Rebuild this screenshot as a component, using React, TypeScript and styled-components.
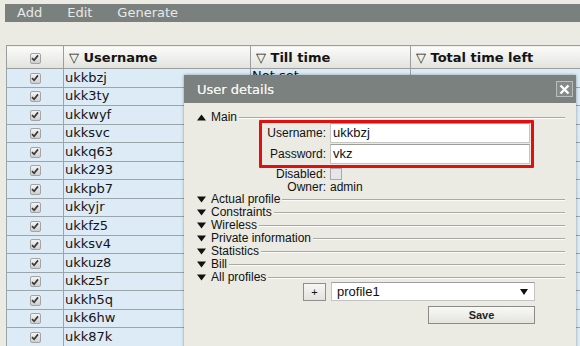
import React from "react";
import styled, { createGlobalStyle } from "styled-components";

const GlobalStyle = createGlobalStyle`
  html, body { margin: 0; padding: 0; background: #ebeae3; overflow: hidden; }
  body { width: 580px; height: 346px; font-family: "DejaVu Sans", sans-serif; }
`;

const Page = styled.div`
  position: relative;
  width: 580px;
  height: 346px;
  overflow: hidden;
  padding: 4px 0 0 5px;
  box-sizing: border-box;
`;

const MenuBar = styled.div`
  height: 18px;
  background: #7a807d;
  display: flex;
  align-items: center;
  gap: 25px;
  padding-left: 12px;
  color: #e6e9e6;
  font-size: 13px;
`;

const MenuItem = styled.span`
  line-height: 18px;
`;

const Table = styled.table`
  margin: 23px 0 0 1px;
  border-collapse: collapse;
  table-layout: fixed;
  width: 620px;
  font-size: 13px;
  color: #141414;
`;

const HeadCell = styled.th`
  height: 22px;
  padding: 0 0 0 5px;
  text-align: left;
  font-weight: bold;
  border: 1px solid #9a9e9e;
  background: linear-gradient(#fbfbfa, #e2e2dd);
  white-space: nowrap;
  overflow: hidden;
`;

const CheckHead = styled(HeadCell)`
  padding: 0;
  text-align: center;
`;

const Row = styled.tr`
  height: 18.5px;
  background: #dcebf5;
`;

const Cell = styled.td`
  padding: 0 0 0 1px;
  border: 1px solid #9aa5aa;
  white-space: nowrap;
  overflow: hidden;
  line-height: 16px;
`;

const TopCell = styled(Cell)`
  vertical-align: top;
  line-height: 14px;
`;

const CheckCell = styled(Cell)`
  padding: 0;
  text-align: center;
`;

const CheckBox = styled.span`
  display: inline-flex;
  align-items: center;
  justify-content: center;
  width: 11px;
  height: 11px;
  box-sizing: border-box;
  border: 1px solid #a4a4a4;
  border-radius: 2px;
  background: linear-gradient(#f4f4f4, #cfcfcf);
  vertical-align: middle;
`;

const Tick = () => (
  <CheckBox>
    <svg width="8" height="8" viewBox="0 0 8 8">
      <path d="M1 4.2 L3.1 6.3 L7 1.4" fill="none" stroke="#3a3a3a" strokeWidth="1.7" />
    </svg>
  </CheckBox>
);

const Dialog = styled.div`
  position: absolute;
  left: 184px;
  top: 75px;
  width: 392px;
  height: 290px;
  background: #ebebe4;
  box-shadow: 0 0 3px rgba(0, 0, 0, 0.35);
  font-family: "Liberation Sans", Arial, sans-serif;
  font-size: 12px;
  color: #111;
`;

const TitleBar = styled.div`
  height: 28px;
  background: #7b817e;
  display: flex;
  align-items: center;
  justify-content: space-between;
  padding: 0 3px 0 13px;
  color: #f1f3f1;
  font-family: "DejaVu Sans", sans-serif;
  font-size: 13px;
  text-shadow: 0 0 0.4px #f1f3f1;
`;

const CloseButton = styled.span`
  width: 17px;
  height: 16px;
  box-sizing: border-box;
  border: 1px solid #b9bdbb;
  display: flex;
  align-items: center;
  justify-content: center;
  background: #858b88;
`;

const Body = styled.div`
  padding: 8px 11px 0 13px;
`;

const SectionHead = styled.div`
  display: flex;
  align-items: center;
  height: 13px;
  line-height: 13px;
`;

const Arrow = styled.svg`
  width: 9px;
  height: 7px;
  margin-right: 5px;
  flex: none;
`;

const SectionLine = styled.span`
  flex: 1;
  height: 0;
  border-top: 1px solid #a9aaa6;
  border-bottom: 1px solid #fbfbf8;
  margin-left: 2px;
  margin-top: 1px;
`;

const Highlight = styled.div`
  position: relative;
  margin: -4px 0 0 62px;
  width: 275px;
  box-sizing: border-box;
  border: 3px solid #e01010;
  border-radius: 1px;
  display: flex;
  flex-direction: column;
  gap: 1px;
  padding-bottom: 1px;
  background: #ebebe4;
`;

const FieldRow = styled.div<{ $compact?: boolean }>`
  display: flex;
  align-items: center;
  gap: 4px;
  height: ${(p) => (p.$compact ? "12.5px" : "20px")};
`;

const Label = styled.span<{ $w: number }>`
  width: ${(p) => p.$w}px;
  text-align: right;
  flex: none;
`;

const TextInput = styled.div`
  width: 200px;
  height: 20px;
  box-sizing: border-box;
  background: #fff;
  border: 1px solid #c4c4c0;
  border-top-color: #9d9d9a;
  font-size: 13px;
  line-height: 18px;
  padding-left: 2px;
`;

const SmallBox = styled.span`
  width: 12px;
  height: 12px;
  box-sizing: border-box;
  border: 1px solid #a8a8b0;
  background: #e6e6ea;
`;

const Extra = styled.div`
  display: flex;
  flex-direction: column;
  margin-top: 0px;
`;

const Sections = styled.div`
  margin-top: 0px;
  display: flex;
  flex-direction: column;
`;

const ProfileRow = styled.div`
  display: flex;
  gap: 5px;
  margin: -2px 0 0 106px;
  align-items: center;
`;

const PlusButton = styled.span`
  width: 23px;
  height: 18px;
  box-sizing: border-box;
  border: 1px solid #8f8f8c;
  background: linear-gradient(#f6f6f3, #e2e2de);
  display: flex;
  align-items: center;
  justify-content: center;
  font-size: 11px;
`;

const Select = styled.div`
  width: 204px;
  height: 19px;
  box-sizing: border-box;
  background: #fff;
  border: 1px solid #c3c3bf;
  border-top-color: #9e9e9b;
  display: flex;
  align-items: center;
  justify-content: space-between;
  padding: 0 6px 0 5px;
  font-size: 13px;
`;

const SaveButton = styled.div`
  margin: 5px 0 0 231px;
  width: 107px;
  height: 18px;
  box-sizing: border-box;
  border: 1px solid #8a8a87;
  background: linear-gradient(#f8f8f5, #e4e4df);
  display: flex;
  align-items: center;
  justify-content: center;
  font-size: 11px;
  font-weight: bold;
  color: #222;
`;

const users = [
  "ukkbzj", "ukk3ty", "ukkwyf", "ukksvc", "ukkq63", "ukk293", "ukkpb7", "ukkyjr",
  "ukkfz5", "ukksv4", "ukkuz8", "ukkz5r", "ukkh5q", "ukk6hw", "ukk87k",
];

const collapsed = ["Actual profile", "Constraints", "Wireless", "Private information", "Statistics", "Bill", "All profiles"];

const Down = () => (
  <Arrow viewBox="0 0 9 7">
    <path d="M0 0.5 H9 L4.5 6.5 Z" fill="#111" />
  </Arrow>
);

const Up = () => (
  <Arrow viewBox="0 0 9 7">
    <path d="M0 6.5 H9 L4.5 0.5 Z" fill="#111" />
  </Arrow>
);

export default function App() {
  return (
    <Page>
      <GlobalStyle />
      <MenuBar>
        <MenuItem>Add</MenuItem>
        <MenuItem>Edit</MenuItem>
        <MenuItem>Generate</MenuItem>
      </MenuBar>
      <Table>
        <colgroup>
          <col style={{ width: 57 }} />
          <col style={{ width: 187 }} />
          <col style={{ width: 160 }} />
          <col style={{ width: 216 }} />
        </colgroup>
        <thead>
          <tr>
            <CheckHead><Tick /></CheckHead>
            <HeadCell>▽ Username</HeadCell>
            <HeadCell>▽ Till time</HeadCell>
            <HeadCell>▽ Total time left</HeadCell>
          </tr>
        </thead>
        <tbody>
          {users.map((u, i) => (
            <Row key={u}>
              <CheckCell><Tick /></CheckCell>
              <Cell>{u}</Cell>
              <TopCell>{i === 0 ? "Not set" : ""}</TopCell>
              <Cell />
            </Row>
          ))}
        </tbody>
      </Table>

      <Dialog>
        <TitleBar>
          <span>User details</span>
          <CloseButton>
            <svg width="11" height="11" viewBox="0 0 11 11">
              <path d="M1.5 1.5 L9.5 9.5 M9.5 1.5 L1.5 9.5" stroke="#fff" strokeWidth="2.4" />
            </svg>
          </CloseButton>
        </TitleBar>
        <Body>
          <SectionHead>
            <Up />
            <span>Main</span>
            <SectionLine />
          </SectionHead>
          <Highlight>
            <FieldRow>
              <Label $w={64}>Username:</Label>
              <TextInput>ukkbzj</TextInput>
            </FieldRow>
            <FieldRow>
              <Label $w={64}>Password:</Label>
              <TextInput>vkz</TextInput>
            </FieldRow>
          </Highlight>
          <Extra>
            <FieldRow $compact>
              <Label $w={129}>Disabled:</Label>
              <SmallBox />
            </FieldRow>
            <FieldRow $compact>
              <Label $w={129}>Owner:</Label>
              <span>admin</span>
            </FieldRow>
          </Extra>
          <Sections>
            {collapsed.map((s) => (
              <SectionHead key={s}>
                <Down />
                <span>{s}</span>
                <SectionLine />
              </SectionHead>
            ))}
          </Sections>
          <ProfileRow>
            <PlusButton>+</PlusButton>
            <Select>
              <span>profile1</span>
              <svg width="8" height="6" viewBox="0 0 8 6">
                <path d="M0 0 H8 L4 6 Z" fill="#111" />
              </svg>
            </Select>
          </ProfileRow>
          <SaveButton>Save</SaveButton>
        </Body>
      </Dialog>
    </Page>
  );
}
